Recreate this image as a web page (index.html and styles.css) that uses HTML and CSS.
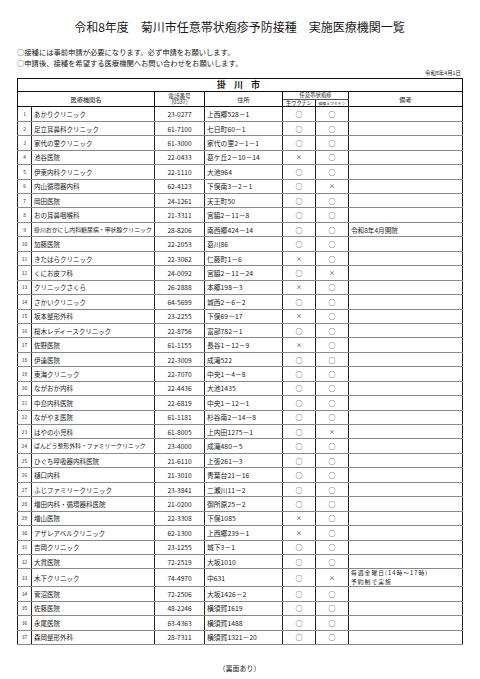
FILE: index.html
```html
<!DOCTYPE html>
<html lang="ja">
<head>
<meta charset="utf-8">
<title>令和8年度 菊川市任意帯状疱疹予防接種 実施医療機関一覧</title>
<link rel="stylesheet" href="styles.css">
</head>
<body>
<div class="page">
  <h1 class="title">令和8年度　菊川市任意帯状疱疹予防接種　実施医療機関一覧</h1>
  <div class="notes">
    <p>○接種には事前申請が必要になります。必ず申請をお願いします。</p>
    <p>○申請後、接種を希望する医療機関へお問い合わせをお願いします。</p>
  </div>
  <div class="date">令和8年4月1日</div>
  <table class="list">
    <colgroup>
      <col class="c-no"><col class="c-name"><col class="c-tel"><col class="c-addr"><col class="c-mk"><col class="c-mk"><col class="c-rem">
    </colgroup>
    <thead>
      <tr class="city-row"><th colspan="7" class="city">掛 川 市</th></tr>
      <tr class="head-a">
        <th colspan="2" rowspan="2" class="h">医療機関名</th>
        <th rowspan="2" class="h tel-h"><span>電話番号</span><span>(0537)</span></th>
        <th rowspan="2" class="h">住所</th>
        <th colspan="2" class="h sub-top">任意帯状疱疹</th>
        <th rowspan="2" class="h">備考</th>
      </tr>
      <tr class="head-b">
        <th class="h live">生ワクチン</th>
        <th class="h recomb">組換えワクチン</th>
      </tr>
    </thead>
    <tbody>
      <tr><td class="no">1</td><td class="name">あかりクリニック</td><td class="tel">23-0277</td><td class="addr">上西郷528－1</td><td class="mk">○</td><td class="mk">○</td><td class="rem"></td></tr>
      <tr><td class="no">2</td><td class="name">足立耳鼻科クリニック</td><td class="tel">61-7100</td><td class="addr">七日町60－1</td><td class="mk">○</td><td class="mk">○</td><td class="rem"></td></tr>
      <tr><td class="no">3</td><td class="name">家代の里クリニック</td><td class="tel">61-3000</td><td class="addr">家代の里2－1－1</td><td class="mk">○</td><td class="mk">○</td><td class="rem"></td></tr>
      <tr><td class="no">4</td><td class="name">池谷医院</td><td class="tel">22-0433</td><td class="addr">葛ケ丘2－10－14</td><td class="mk x">×</td><td class="mk">○</td><td class="rem"></td></tr>
      <tr><td class="no">5</td><td class="name">伊東内科クリニック</td><td class="tel">22-1110</td><td class="addr">大池964</td><td class="mk">○</td><td class="mk">○</td><td class="rem"></td></tr>
      <tr><td class="no">6</td><td class="name">内山循環器内科</td><td class="tel">62-4123</td><td class="addr">下俣南3－2－1</td><td class="mk">○</td><td class="mk x">×</td><td class="rem"></td></tr>
      <tr><td class="no">7</td><td class="name">岡田医院</td><td class="tel">24-1261</td><td class="addr">天王町50</td><td class="mk">○</td><td class="mk">○</td><td class="rem"></td></tr>
      <tr><td class="no">8</td><td class="name">おの耳鼻咽喉科</td><td class="tel">21-3311</td><td class="addr">宮脇2－11－8</td><td class="mk">○</td><td class="mk">○</td><td class="rem"></td></tr>
      <tr><td class="no">9</td><td class="name small">掛川おかにし内科糖尿病・甲状腺クリニック</td><td class="tel">28-8206</td><td class="addr">南西郷424－14</td><td class="mk">○</td><td class="mk">○</td><td class="rem">令和8年4月開院</td></tr>
      <tr><td class="no">10</td><td class="name">加藤医院</td><td class="tel">22-2053</td><td class="addr">葛川86</td><td class="mk">○</td><td class="mk">○</td><td class="rem"></td></tr>
      <tr><td class="no">11</td><td class="name">きたはらクリニック</td><td class="tel">22-3062</td><td class="addr">仁藤町1－6</td><td class="mk x">×</td><td class="mk">○</td><td class="rem"></td></tr>
      <tr><td class="no">12</td><td class="name">くにお皮フ科</td><td class="tel">24-0092</td><td class="addr">宮脇2－11－24</td><td class="mk">○</td><td class="mk x">×</td><td class="rem"></td></tr>
      <tr><td class="no">13</td><td class="name">クリニックさくら</td><td class="tel">26-2888</td><td class="addr">本郷198－3</td><td class="mk x">×</td><td class="mk">○</td><td class="rem"></td></tr>
      <tr><td class="no">14</td><td class="name">さかいクリニック</td><td class="tel">64-5699</td><td class="addr">城西2－6－2</td><td class="mk">○</td><td class="mk">○</td><td class="rem"></td></tr>
      <tr><td class="no">15</td><td class="name">坂本整形外科</td><td class="tel">23-2255</td><td class="addr">下俣69－17</td><td class="mk x">×</td><td class="mk">○</td><td class="rem"></td></tr>
      <tr><td class="no">16</td><td class="name">桜木レディースクリニック</td><td class="tel">22-8756</td><td class="addr">富部782－1</td><td class="mk">○</td><td class="mk">○</td><td class="rem"></td></tr>
      <tr><td class="no">17</td><td class="name">佐野医院</td><td class="tel">61-1155</td><td class="addr">長谷1－12－9</td><td class="mk x">×</td><td class="mk">○</td><td class="rem"></td></tr>
      <tr><td class="no">18</td><td class="name">伊達医院</td><td class="tel">22-3009</td><td class="addr">成滝522</td><td class="mk">○</td><td class="mk">○</td><td class="rem"></td></tr>
      <tr><td class="no">19</td><td class="name">東海クリニック</td><td class="tel">22-7070</td><td class="addr">中央1－4－8</td><td class="mk">○</td><td class="mk">○</td><td class="rem"></td></tr>
      <tr><td class="no">20</td><td class="name">ながおか内科</td><td class="tel">22-4436</td><td class="addr">大池1435</td><td class="mk">○</td><td class="mk">○</td><td class="rem"></td></tr>
      <tr><td class="no">21</td><td class="name">中島内科医院</td><td class="tel">22-6819</td><td class="addr">中央1－12－1</td><td class="mk">○</td><td class="mk">○</td><td class="rem"></td></tr>
      <tr><td class="no">22</td><td class="name">ながやま医院</td><td class="tel">61-1181</td><td class="addr">杉谷南2－14－8</td><td class="mk">○</td><td class="mk">○</td><td class="rem"></td></tr>
      <tr><td class="no">23</td><td class="name">はやの小児科</td><td class="tel">61-8005</td><td class="addr">上内田1275－1</td><td class="mk">○</td><td class="mk x">×</td><td class="rem"></td></tr>
      <tr><td class="no">24</td><td class="name small">ばんどう整形外科・ファミリークリニック</td><td class="tel">23-4000</td><td class="addr">成滝480－5</td><td class="mk">○</td><td class="mk">○</td><td class="rem"></td></tr>
      <tr><td class="no">25</td><td class="name">ひぐち呼吸器内科医院</td><td class="tel">21-6110</td><td class="addr">上張261－3</td><td class="mk">○</td><td class="mk">○</td><td class="rem"></td></tr>
      <tr><td class="no">26</td><td class="name">樋口内科</td><td class="tel">21-3010</td><td class="addr">青葉台21－16</td><td class="mk">○</td><td class="mk">○</td><td class="rem"></td></tr>
      <tr><td class="no">27</td><td class="name">ふじファミリークリニック</td><td class="tel">23-3841</td><td class="addr">二瀬川11－2</td><td class="mk">○</td><td class="mk">○</td><td class="rem"></td></tr>
      <tr><td class="no">28</td><td class="name">増田内科・循環器科医院</td><td class="tel">21-0200</td><td class="addr">御所原25－2</td><td class="mk">○</td><td class="mk">○</td><td class="rem"></td></tr>
      <tr><td class="no">29</td><td class="name">増山医院</td><td class="tel">22-3308</td><td class="addr">下俣1085</td><td class="mk x">×</td><td class="mk">○</td><td class="rem"></td></tr>
      <tr><td class="no">30</td><td class="name">アザレアベルクリニック</td><td class="tel">62-1300</td><td class="addr">上西郷239－1</td><td class="mk x">×</td><td class="mk">○</td><td class="rem"></td></tr>
      <tr><td class="no">31</td><td class="name">吉岡クリニック</td><td class="tel">23-1255</td><td class="addr">城下3－1</td><td class="mk">○</td><td class="mk">○</td><td class="rem"></td></tr>
      <tr><td class="no">32</td><td class="name">大貫医院</td><td class="tel">72-2519</td><td class="addr">大坂1010</td><td class="mk">○</td><td class="mk">○</td><td class="rem"></td></tr>
      <tr class="tall"><td class="no">33</td><td class="name">木下クリニック</td><td class="tel">74-4970</td><td class="addr">中631</td><td class="mk">○</td><td class="mk x">×</td><td class="rem two"><span>毎週金曜日(14時～17時)</span><span>予約制で実施</span></td></tr>
      <tr><td class="no">34</td><td class="name">菅沼医院</td><td class="tel">72-2506</td><td class="addr">大坂1426－2</td><td class="mk">○</td><td class="mk">○</td><td class="rem"></td></tr>
      <tr><td class="no">35</td><td class="name">佐藤医院</td><td class="tel">48-2246</td><td class="addr">横須賀1619</td><td class="mk">○</td><td class="mk">○</td><td class="rem"></td></tr>
      <tr><td class="no">36</td><td class="name">永尾医院</td><td class="tel">63-4363</td><td class="addr">横須賀1488</td><td class="mk">○</td><td class="mk">○</td><td class="rem"></td></tr>
      <tr><td class="no">37</td><td class="name">森岡整形外科</td><td class="tel">28-7311</td><td class="addr">横須賀1321－20</td><td class="mk">○</td><td class="mk">○</td><td class="rem"></td></tr>
    </tbody>
  </table>
  <p class="footer">（裏面あり）</p>
</div>
</body>
</html>
```

FILE: styles.css
```css
html, body {
  margin: 0;
  padding: 0;
  background: #ffffff;
}

body {
  font-family: "Noto Sans CJK JP", "Noto Sans", sans-serif;
  color: #1a1a1a;
}

.page {
  padding: 0 18px 0 17px;
}

.title {
  margin: 20px 0 0;
  font-size: 12px;
  line-height: 14px;
  font-weight: 400;
  text-align: center;
}

.notes {
  margin-top: 13px;
}

.notes p {
  margin: 0;
  font-size: 7.3px;
  line-height: 10.7px;
}

.date {
  margin-top: 2px;
  text-align: right;
  font-size: 5.4px;
  line-height: 7px;
  padding-right: 1px;
}

.list {
  margin-top: 1px;
  width: 445px;
  border-collapse: collapse;
  table-layout: fixed;
  border: 1px solid #111;
}

.c-no { width: 14px; }
.c-name { width: 123px; }
.c-tel { width: 50px; }
.c-addr { width: 78px; }
.c-mk { width: 33px; }
.c-rem { width: 114px; }

.list th,
.list td {
  padding: 0;
  font-weight: normal;
  overflow: hidden;
  white-space: nowrap;
}

.list th {
  border: 1px solid #111;
}

.city {
  height: 12px;
  font-size: 9px;
  line-height: 12px;
  font-weight: 700 !important;
  letter-spacing: 3px;
  text-align: center;
}

.h {
  font-size: 6.2px;
  line-height: 7px;
  text-align: center;
  vertical-align: middle;
}

.head-a {
  height: 8px;
}

.head-b {
  height: 7px;
}

.tel-h span {
  display: block;
  font-size: 5.6px;
  line-height: 6.6px;
}

.sub-top {
  font-size: 5.4px;
  line-height: 7px;
  border-bottom-color: #555 !important;
}

.live {
  font-size: 5.2px;
  line-height: 6px;
}

.recomb {
  font-size: 3.9px;
  line-height: 6px;
}

.list tbody tr {
  height: 14.45px;
}

.list tbody tr.tall {
  height: 17.3px;
}

.list td {
  border-top: 1px solid #8a8a8a;
  border-bottom: 1px solid #8a8a8a;
  border-left: 1px solid #222;
  border-right: 1px solid #222;
  font-size: 6.6px;
  line-height: 8px;
  vertical-align: middle;
}

.list tbody tr:first-child td {
  border-top: 1px solid #111;
}

.no {
  text-align: center;
  font-size: 4.8px !important;
}

.name {
  padding-left: 2px !important;
  font-size: 6.5px !important;
}

.name.small {
  font-size: 5.9px !important;
}

.tel {
  text-align: center;
  font-size: 6.6px;
}

.addr {
  padding-left: 2px !important;
  font-size: 6.8px !important;
}

.mk {
  text-align: center;
  font-size: 7px !important;
  color: #111;
}

.mk.x {
  font-size: 6px !important;
}

.rem {
  padding-left: 2px !important;
  font-size: 6.6px !important;
}

.rem.two {
  font-size: 5.8px !important;
  letter-spacing: 1px;
}

.rem.two span {
  display: block;
  line-height: 8.4px;
}

.footer {
  margin: 19px 0 0;
  text-align: center;
  font-size: 7px;
  line-height: 9px;
}
```
